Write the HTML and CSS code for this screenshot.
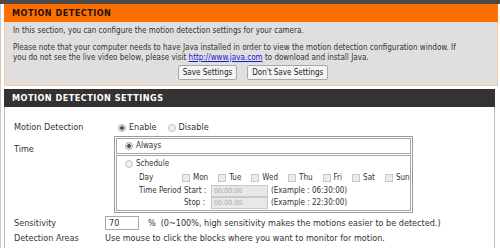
FILE: index.html
```html
<!DOCTYPE html>
<html>
<head>
<meta charset="utf-8">
<link rel="stylesheet" href="styles.css">
</head>
<body>
<div class="topbar"></div>
<div class="page">
  <section class="box box-orange">
    <div class="head head-orange">MOTION DETECTION</div>
    <div class="body-orange">
      <p class="line1">In this section, you can configure the motion detection settings for your camera.</p>
      <p class="line2">Please note that your computer needs to have Java installed in order to view the motion detection configuration window. If you do not see the live video below, please visit <a href="#">http://www.java.com</a> to download and install Java.</p>
      <div class="buttons">
        <button class="btn">Save Settings</button>
        <button class="btn">Don't Save Settings</button>
      </div>
    </div>
  </section>
  <section class="box box-dark">
    <div class="head head-dark">MOTION DETECTION SETTINGS</div>
    <div class="settings">
      <div class="label">Motion Detection</div>
      <div class="value radios">
        <label class="opt"><span class="radio on"></span>Enable</label>
        <label class="opt"><span class="radio"></span>Disable</label>
      </div>

      <div class="label label-time">Time</div>
      <div class="value">
        <div class="timebox">
          <div class="cell cell-always"><span class="radio on"></span>Always</div>
          <div class="cell cell-sched">
            <div class="sched-line"><span class="radio"></span>Schedule</div>
            <div class="sub-row">
              <span class="sub-label">Day</span>
              <span class="days">
                <span class="day"><span class="check"></span>Mon</span>
                <span class="day"><span class="check"></span>Tue</span>
                <span class="day"><span class="check"></span>Wed</span>
                <span class="day"><span class="check"></span>Thu</span>
                <span class="day"><span class="check"></span>Fri</span>
                <span class="day"><span class="check"></span>Sat</span>
                <span class="day"><span class="check"></span>Sun</span>
              </span>
            </div>
            <div class="sub-row">
              <span class="sub-label">Time Period</span>
              <span class="tp">Start :</span>
              <span class="tinput">00:00:00</span>
              <span class="example">(Example : 06:30:00)</span>
            </div>
            <div class="sub-row sub-last">
              <span class="sub-label"></span>
              <span class="tp">Stop :</span>
              <span class="tinput">00:00:00</span>
              <span class="example">(Example : 22:30:00)</span>
            </div>
          </div>
        </div>
      </div>

      <div class="label label-sens">Sensitivity</div>
      <div class="value sens">
        <span class="sinput">70</span>
        <span class="pct">%</span>
        <span>(0~100%, high sensitivity makes the motions easier to be detected.)</span>
      </div>

      <div class="label label-area">Detection Areas</div>
      <div class="value area">Use mouse to click the blocks where you want to monitor for motion.</div>
    </div>
  </section>
</div>
</body>
</html>
```
FILE: styles.css
```css
* { box-sizing: border-box; }
html, body { margin: 0; padding: 0; }
body {
  width: 500px;
  height: 248px;
  overflow: hidden;
  background: #ffffff;
  font-family: "DejaVu Sans Condensed", "DejaVu Sans", sans-serif;
  font-stretch: condensed;
  font-size: 8px;
  color: #333;
  white-space: nowrap;
}
.topbar { height: 4px; background: #4a4a4a; }
.page {
  padding-left: 3px;
  border-left: 1px solid #c8c8c8;
}
.box-orange {
  width: 494px;
  height: 82px;
  background: #dfdfdf;
  border: 1px solid #f7c9a0;
  border-top: 0;
}
.head {
  font-weight: bold;
  font-size: 9px;
  letter-spacing: 0.5px;
  padding-left: 8px;
  display: flex;
  align-items: center;
}
.head-orange {
  height: 18px;
  background: #ff6f00;
  color: #1e1208;
  margin: 0 -1px;
}
.body-orange { padding: 4px 28px 0 8px; white-space: normal; }
.body-orange p { margin: 0; line-height: 10px; }
.line1 { margin-bottom: 7px !important; }
.body-orange a { color: #1a1acc; text-decoration: underline; }
.buttons {
  display: flex;
  justify-content: center;
  gap: 10px;
  margin-top: 2px;
  padding-left: 24px;
}
.btn {
  font: inherit;
  font-stretch: condensed;
  color: #222;
  height: 15px;
  padding: 0 4px;
  background: #f4f4f4;
  border: 1px solid #a8a8a8;
  border-radius: 2px;
  line-height: 12px;
}
.box-dark {
  margin-top: 3px;
  width: 491px;
  border-left: 1px solid #bdbdbd;
  border-right: 1px solid #bdbdbd;
  height: 160px;
}
.head-dark {
  height: 18px;
  background: #333333;
  color: #ffffff;
  margin-left: -1px;
  margin-right: -1px;
}
.settings {
  display: grid;
  grid-template-columns: 91px 1fr;
  padding: 12px 0 0 9px;
  align-items: center;
  font-size: 9px;
  line-height: 11px;
}
.label { height: 17px; display: flex; align-items: center; color: #333; }
.value { display: flex; align-items: center; min-height: 17px; }
.label-time { align-self: start; padding-top: 8px; height: auto; }
.radios { padding-left: 13px; }
.opt { display: flex; align-items: center; margin-right: 11px; }
.radio {
  width: 8px; height: 8px; border-radius: 50%;
  border: 1px solid #c4c4c4;
  background: #efefef;
  margin-right: 3px;
  display: inline-block;
  flex: none;
}
.radio.on {
  background: radial-gradient(circle, #555 0 1.6px, #e8e8e8 2.2px);
  border-color: #aaa;
}
.check {
  width: 8px; height: 8px;
  border: 1px solid #c8c8c8;
  background: #ececec;
  display: inline-block;
  margin-right: 3px;
  flex: none;
}
.timebox {
  margin-left: 9px;
  width: 299px;
  border: 1px solid #9a9a9a;
  padding: 1px;
  display: flex;
  flex-direction: column;
  gap: 1px;
  font-size: 8px;
  line-height: 10px;
}
.cell { border: 1px solid #a5a5a5; padding-left: 8px; }
.cell-always { height: 16px; display: flex; align-items: center; }
.cell-sched { padding-bottom: 1px; }
.sched-line { height: 15px; display: flex; align-items: center; }
.sub-row { display: flex; align-items: center; height: 13px; }
.sub-last { height: 12px; }
.sub-label { width: 45px; margin-left: 14px; flex: none; }
.days { display: flex; align-items: center; margin-left: -2px; }
.day { display: flex; align-items: center; margin-right: 10px; }
.tp { width: 27px; flex: none; }
.tinput {
  width: 57px; height: 12px;
  background: #e8e8e8;
  border: 1px solid #c8c8c8;
  color: #aaa;
  font-size: 7px;
  display: flex; align-items: center;
  padding-left: 2px;
  margin-right: 3px;
}
.example { color: #333; }
.label-sens, .sens { margin-top: 2px; height: 16px; min-height: 16px; }
.sinput {
  width: 34px; height: 14px;
  border: 1px solid #a8a8a8;
  background: #fff;
  padding-left: 3px;
  display: flex; align-items: center;
  margin-right: 9px;
}
.pct { margin-right: 5px; }
.label-area, .area { height: 15px; min-height: 15px; }
```
